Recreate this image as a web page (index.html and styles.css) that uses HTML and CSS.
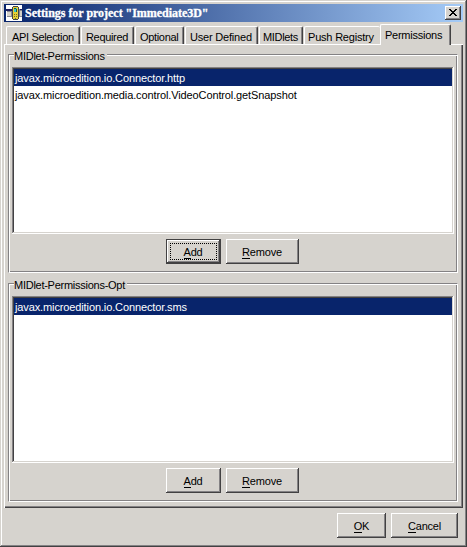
FILE: index.html
```html
<!DOCTYPE html>
<html lang="en">
<head>
<meta charset="utf-8">
<title>Settings for project "Immediate3D"</title>
<link rel="stylesheet" href="styles.css">
</head>
<body>
<div class="window">
  <header class="titlebar">
    <svg class="app-icon" width="16" height="16" viewBox="0 0 16 16" shape-rendering="crispEdges" aria-hidden="true">
      <path fill="#fff" d="M0 0h16v16H0z"/>
      <path fill="#888890" d="M1 4h5v8H1zM13 4h3v8h-3z"/>
      <path fill="#20205c" d="M0 4h6v2H0zM14 4h2v1h-2z"/>
      <path fill="#d4d0c8" d="M1 7h4v4H1zM14 6h2v5h-2z"/>
      <path fill="#444" d="M7 1h5v1H7zM6 2h1v12H6zM12 2h1v12h-1zM7 14h5v1H7z"/>
      <path fill="#e6cf35" d="M7 2h5v12H7z"/>
      <path fill="#38c8c8" d="M8 3h3v4H8z"/>
      <path fill="#215c40" d="M8 3h2v1H8zM10 4h1v3h-1z"/>
      <path fill="#776b24" d="M8 9h1v1H8zM10 9h1v1h-1zM8 11h1v1H8zM10 11h1v1h-1zM9 13h1v1H9z"/>
    </svg>
    <h1 class="title">Settings for project "Immediate3D"</h1>
    <button class="close" aria-label="Close">
      <svg width="8" height="7" viewBox="0 0 8 7" shape-rendering="crispEdges"><path d="M0 0h2v1H0zM6 0h2v1H6zM1 1h2v1H1zM5 1h2v1H5zM2 2h4v1H2zM3 3h2v1H3zM2 4h4v1H2zM1 5h2v1H1zM5 5h2v1H5zM0 6h2v1H0zM6 6h2v1H6z"/></svg>
    </button>
  </header>
  <nav class="tabs">
    <div class="tab api"><span>API Selection</span></div>
    <div class="tab required"><span>Required</span></div>
    <div class="tab optional"><span>Optional</span></div>
    <div class="tab user"><span>User Defined</span></div>
    <div class="tab midlets"><span>MIDlets</span></div>
    <div class="tab push"><span>Push Registry</span></div>
    <div class="tab permissions selected"><span>Permissions</span></div>
  </nav>
  <main class="panel">
    <section class="group">
      <h2 class="legend"><span>MIDlet-Permissions</span></h2>
      <ul class="list">
        <li class="item active"><span>javax.microedition.io.Connector.http</span></li>
        <li class="item"><span>javax.microedition.media.control.VideoControl.getSnapshot</span></li>
      </ul>
      <div class="actions">
        <button class="btn add focused"><span><u>A</u>dd</span></button>
        <button class="btn remove"><span><u>R</u>emove</span></button>
      </div>
    </section>
    <section class="group">
      <h2 class="legend"><span>MIDlet-Permissions-Opt</span></h2>
      <ul class="list">
        <li class="item active"><span>javax.microedition.io.Connector.sms</span></li>
      </ul>
      <div class="actions">
        <button class="btn add"><span><u>A</u>dd</span></button>
        <button class="btn remove"><span><u>R</u>emove</span></button>
      </div>
    </section>
  </main>
  <footer class="footer">
    <button class="btn ok"><span><u>O</u>K</span></button>
    <button class="btn cancel"><span><u>C</u>ancel</span></button>
  </footer>
</div>
</body>
</html>
```
FILE: styles.css
```css
:root {
  --face: #d6d3ce;
  --shadow: #848284;
  --dark: #424142;
  --navy: #08246b;
}

* { box-sizing: border-box; }

body {
  margin: 0;
  background: var(--face);
  color: #000;
  font: 11px/14px "Liberation Sans", Arial, sans-serif;
}

h1, h2, ul { margin: 0; padding: 0; font: inherit; list-style: none; }

span { white-space: nowrap; }

.window {
  width: 467px;
  height: 547px;
  padding: 4px;
  background: var(--face);
  box-shadow: inset -1px -1px var(--dark), inset 1px 1px var(--face),
    inset -2px -2px var(--shadow), inset 2px 2px #fff;
}

.titlebar {
  display: flex;
  align-items: center;
  width: 459px;
  height: 18px;
  padding: 0 2px;
  background: linear-gradient(90deg, #08246b, #a5cbf7);
}

.app-icon { flex: none; }

.title {
  flex: 1;
  padding-left: 3px;
  color: #fff;
  font: bold 12px/16px "Liberation Serif", serif;
  letter-spacing: -0.03px;
  -webkit-text-stroke: 0.3px #fff;
  white-space: nowrap;
}

.close {
  display: flex;
  width: 16px;
  height: 14px;
  padding: 3px 0 0 4px;
  border: 0;
  background: var(--face);
  box-shadow: inset -1px -1px var(--dark), inset 1px 1px #fff, inset -2px -2px var(--shadow);
}

.tabs {
  display: flex;
  align-items: flex-end;
  height: 22px;
  padding-left: 2px;
  letter-spacing: -0.33px;
}

.tab {
  height: 18px;
  padding-top: 3px;
  border-top: 1px solid #fff;
  border-left: 1px solid #fff;
  border-right: 1px solid var(--dark);
  border-radius: 2px 2px 0 0;
  box-shadow: inset -1px 0 var(--shadow);
}

.api { width: 74px; padding-left: 5px; }
.required { width: 53px; margin-left: 1px; padding-left: 4px; }
.optional { width: 49px; margin-left: 1px; padding-left: 4px; }
.user { width: 73px; margin-left: 1px; padding-left: 4px; letter-spacing: -0.2px; }
.midlets { width: 44px; margin-left: 1px; padding-left: 3px; }
.push { width: 76px; margin-left: 1px; padding-left: 3px; border-right: 0; box-shadow: none; letter-spacing: -0.2px; }
.permissions { width: 71px; padding-left: 4px; letter-spacing: -0.25px; }

.selected {
  z-index: 1;
  height: 21px;
  margin-bottom: -1px;
  background: var(--face);
}

.panel {
  width: 459px;
  height: 464px;
  padding: 10px 5px 0 4px;
  border-top: 1px solid #fff;
  border-left: 1px solid #fff;
  box-shadow: inset -1px -1px var(--dark), inset -2px -2px var(--shadow);
}

.group {
  width: 450px;
  height: 219px;
  margin: -1px 0 11px -1px;
  padding: 0 4px;
  border: 1px solid var(--shadow);
  border-right-color: #fff;
  border-bottom-color: #fff;
  box-shadow: inset 1px 1px #fff, inset -1px -1px var(--shadow);
}

.legend { height: 12px; letter-spacing: -0.26px; }

.legend span {
  position: relative;
  top: -6px;
  display: inline-block;
  margin-left: 1px;
  padding-right: 2px;
  background: var(--face);
}

.list {
  width: 442px;
  height: 167px;
  margin-left: -1px;
  padding: 2px;
  background: #fff;
  box-shadow: inset -1px -1px #fff, inset 1px 1px var(--shadow),
    inset -2px -2px var(--face), inset 2px 2px var(--dark);
}

.item {
  height: 17px;
  padding-left: 1px;
  line-height: 19px;
  letter-spacing: -0.12px;
}

.active { background: var(--navy); color: #fff; }

.actions { display: flex; gap: 5px; padding: 5px 0 0 153px; }

.btn {
  height: 25px;
  padding: 1px 0 0;
  border: 0;
  background: var(--face);
  box-shadow: inset -1px -1px var(--dark), inset 1px 1px #fff, inset -2px -2px var(--shadow);
  color: #000;
  font: inherit;
  letter-spacing: -0.2px;
  text-align: center;
}

.btn u { text-decoration: none; border-bottom: 1px solid #000; }

.add { width: 55px; padding-right: 1px; }
.remove { width: 73px; padding-right: 1px; }
.ok { width: 49px; }
.cancel { width: 67px; }

.focused {
  outline: 1px dotted #000;
  outline-offset: -5px;
  box-shadow: inset 0 0 0 1px var(--dark), inset -2px -2px var(--dark),
    inset 2px 2px #fff, inset -3px -3px var(--shadow);
}

.footer {
  display: flex;
  justify-content: flex-end;
  gap: 5px;
  padding: 5px 5px 0 0;
}
```
